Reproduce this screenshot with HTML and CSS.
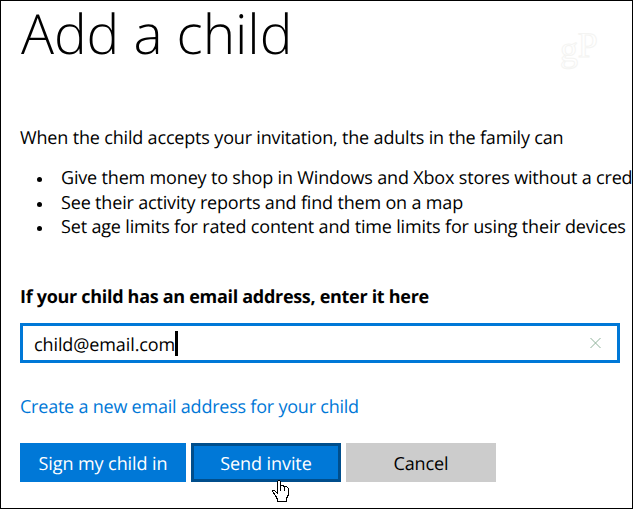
FILE: index.html
```html
<!DOCTYPE html>
<html>
	<head>
		<meta charset="UTF-8">
		<title>Add a child</title>
		<link rel="stylesheet" href="styles.css">
	</head>
	<body>
		<div id="wrap">
			<h1 class="title">Add a child</h1>
			<div class="logo">g<span>P</span></div>
			<p class="intro">When the child accepts your invitation, the adults in the family can</p>
			<ul class="list">
				<li>Give them money to shop in Windows and Xbox stores without a cred</li>
				<li>See their activity reports and find them on a map</li>
				<li>Set age limits for rated content and time limits for using their devices</li>
			</ul>
			<p class="label">If your child has an email address, enter it here</p>
			<div class="field">
				<span class="value">child@email.com</span><i class="caret"></i>
				<svg class="clear" width="11" height="10" viewBox="0 0 11 10"><path d="M.5 0L10.500 10M10.500 0L.5 10"/></svg>
			</div>
			<a class="link">Create a new email address for your child</a>
			<div class="btns">
				<div class="btn sign"><span>Sign my child in</span></div>
				<div class="btn send"><span>Send invite</span>
					<svg class="hand" width="18" height="23" viewBox="0 0 18 23" shape-rendering="crispEdges">
						<path d="M5.500 13.500V1.500L6.500 .5H7.500L8.500 1.500V6.500L9.500 5.500H11.500L12.500 7.500L13.500 6.500H14.500L16.500 8.500V14.500L14.500 18.500V21.500H5.500V19.500L3.500 15.500L.5 11.500V10.500H2.500L5.500 13.500"/>
						<path d="M8.500 6V11M12.500 7V11"/>
					</svg>
				</div>
				<div class="btn cancel"><span>Cancel</span></div>
			</div>
		</div>
	</body>
</html>
```

FILE: styles.css
```css
*{
	margin:0px;
	padding:0px;
	box-sizing:border-box;
}
#wrap{
	width:633px;
	height:509px;
	position: relative;
	overflow:hidden;
	border:1px solid #000;
	padding:1px 0px 0px 19px;
	background:#fff;
	color:#000;
	font:18px/24px "Open Sans","Noto Sans",sans-serif;
	letter-spacing:-0.17px;
	text-rendering:geometricPrecision;
	white-space:nowrap;
}
.title{
	height:60px;
	padding-left:1px;
	line-height:64px;
	font-size:55px;
	font-weight:300;
	letter-spacing:-0.1px;
}
.logo{
	position: absolute;
	left:559px;
	top:28px;
	font:36px/40px "Liberation Serif",serif;
	color:#fff;
	-webkit-text-stroke:1px #f4f4f2;
}
.logo span{
	position: relative;
	top:-4px;
}
.intro{
	margin-top:64px;
}
.list{
	margin-top:16px;
	list-style:none;
}
.list li{
	height:24.5px;
	padding-left:41px;
	position: relative;
}
.list li:before{
	content:"";
	position: absolute;
	left:17px;
	top:11px;
	width:5px;
	height:5px;
	border-radius:50%;
	background:#000;
}
.label{
	margin-top:45.5px;
	font-weight:700;
	letter-spacing:-0.3px;
}
.field{
	width:600px;
	height:40px;
	margin-top:14px;
	border:3px solid #0078d7;
	padding:0px 16px 0px 11px;
	display:flex;
	align-items:center;
}
.value{
	padding-top:4px;
	letter-spacing:-0.1px;
}
.caret{
	width:3px;
	height:25px;
	background:#000;
}
.clear{
	margin-left:auto;
	margin-top:-1px;
	fill:none;
	stroke:#8fb29a;
	stroke-width:1;
}
.link{
	display:block;
	margin-top:32px;
	color:#0078d7;
	letter-spacing:-0.22px;
}
.btns{
	display:flex;
	gap:5px;
	margin-top:24px;
}
.btn{
	width:150px;
	height:39px;
	display:flex;
	align-items:center;
	justify-content:center;
	position: relative;
	background:#0078d7;
	color:#fff;
	letter-spacing:-0.08px;
}
.btn span{
	padding-top:2px;
}
.sign{
	width:166px;
}
.send{
	border:3px solid #004e8c;
}
.cancel{
	background:#ccc;
	color:#000;
}
.hand{
	position: absolute;
	left:78px;
	top:34px;
	fill:#fff;
	stroke:#000;
	stroke-width:1;
}
```
